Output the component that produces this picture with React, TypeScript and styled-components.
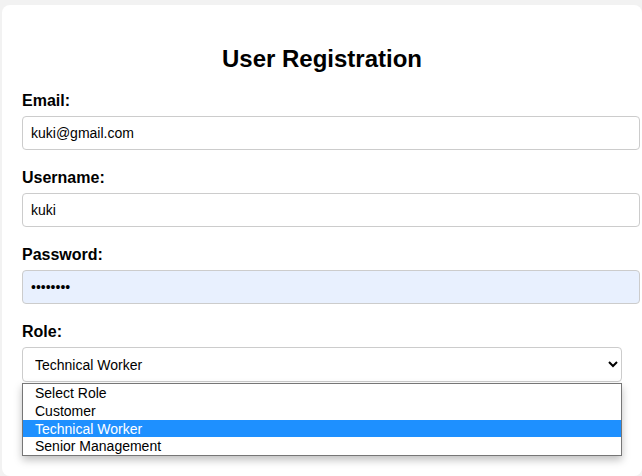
import React from "react";
import styled, { createGlobalStyle } from "styled-components";

const GlobalStyle = createGlobalStyle`
  body {
    margin: 0;
    background: #f2f2f2;
    font-family: "Liberation Sans", Arial, sans-serif;
    overflow: hidden;
  }
`;

const Page = styled.div`
  padding: 5px 0 0 2px;
  height: 476px;
  box-sizing: border-box;
  overflow: hidden;
`;

const Card = styled.div`
  background: #fff;
  border-radius: 8px;
  padding: 20px;
  width: 600px;
  height: 431px;
`;

const Title = styled.h2`
  font-size: 24px;
  font-weight: bold;
  text-align: center;
  margin: 20px 0 19px;
  color: #000;
`;

const Field = styled.div`
  margin-bottom: 19px;
  position: relative;
`;

const Label = styled.label`
  display: block;
  font-weight: bold;
  font-size: 16px;
  margin-bottom: 6px;
  color: #000;
`;

const Input = styled.input<{ $autofill?: boolean }>`
  width: 100%;
  padding: 8px;
  font-family: "Liberation Sans", Arial, sans-serif;
  font-size: 14px;
  border: 1px solid #ccc;
  border-radius: 4px;
  background: ${(p) => (p.$autofill ? "#e8f0fe" : "#fff")};
  color: #000;
  outline: none;
`;

const Select = styled.select`
  width: 100%;
  height: 35px;
  padding: 0 8px;
  font-family: "Liberation Sans", Arial, sans-serif;
  font-size: 14px;
  border: 1px solid #ccc;
  border-radius: 4px;
  background: #fff;
  color: #000;
  outline: none;
`;

const OptionList = styled.ul`
  position: absolute;
  left: 0;
  right: 0;
  top: 60px;
  margin: 0;
  padding: 0;
  list-style: none;
  background: #fff;
  border: 1px solid #767676;
  box-shadow: 0 4px 8px rgba(0, 0, 0, 0.25);
  z-index: 2;
`;

const OptionRow = styled.li<{ $active?: boolean }>`
  height: 17.75px;
  line-height: 18px;
  padding-left: 12px;
  font-size: 14px;
  background: ${(p) => (p.$active ? "#1e90ff" : "transparent")};
  color: ${(p) => (p.$active ? "#fff" : "#000")};
`;

const roles = ["Select Role", "Customer", "Technical Worker", "Senior Management"];

export default function App() {
  return (
    <Page>
      <GlobalStyle />
      <Card>
        <Title>User Registration</Title>
        <Field>
          <Label>Email:</Label>
          <Input type="email" defaultValue="kuki@gmail.com" />
        </Field>
        <Field>
          <Label>Username:</Label>
          <Input type="text" defaultValue="kuki" />
        </Field>
        <Field>
          <Label>Password:</Label>
          <Input type="password" defaultValue="kukikuki" $autofill />
        </Field>
        <Field>
          <Label>Role:</Label>
          <Select defaultValue="Technical Worker">
            {roles.map((r) => (
              <option key={r} value={r}>
                {r}
              </option>
            ))}
          </Select>
          <OptionList>
            {roles.map((r) => (
              <OptionRow key={r} $active={r === "Technical Worker"}>
                {r}
              </OptionRow>
            ))}
          </OptionList>
        </Field>
      </Card>
    </Page>
  );
}
